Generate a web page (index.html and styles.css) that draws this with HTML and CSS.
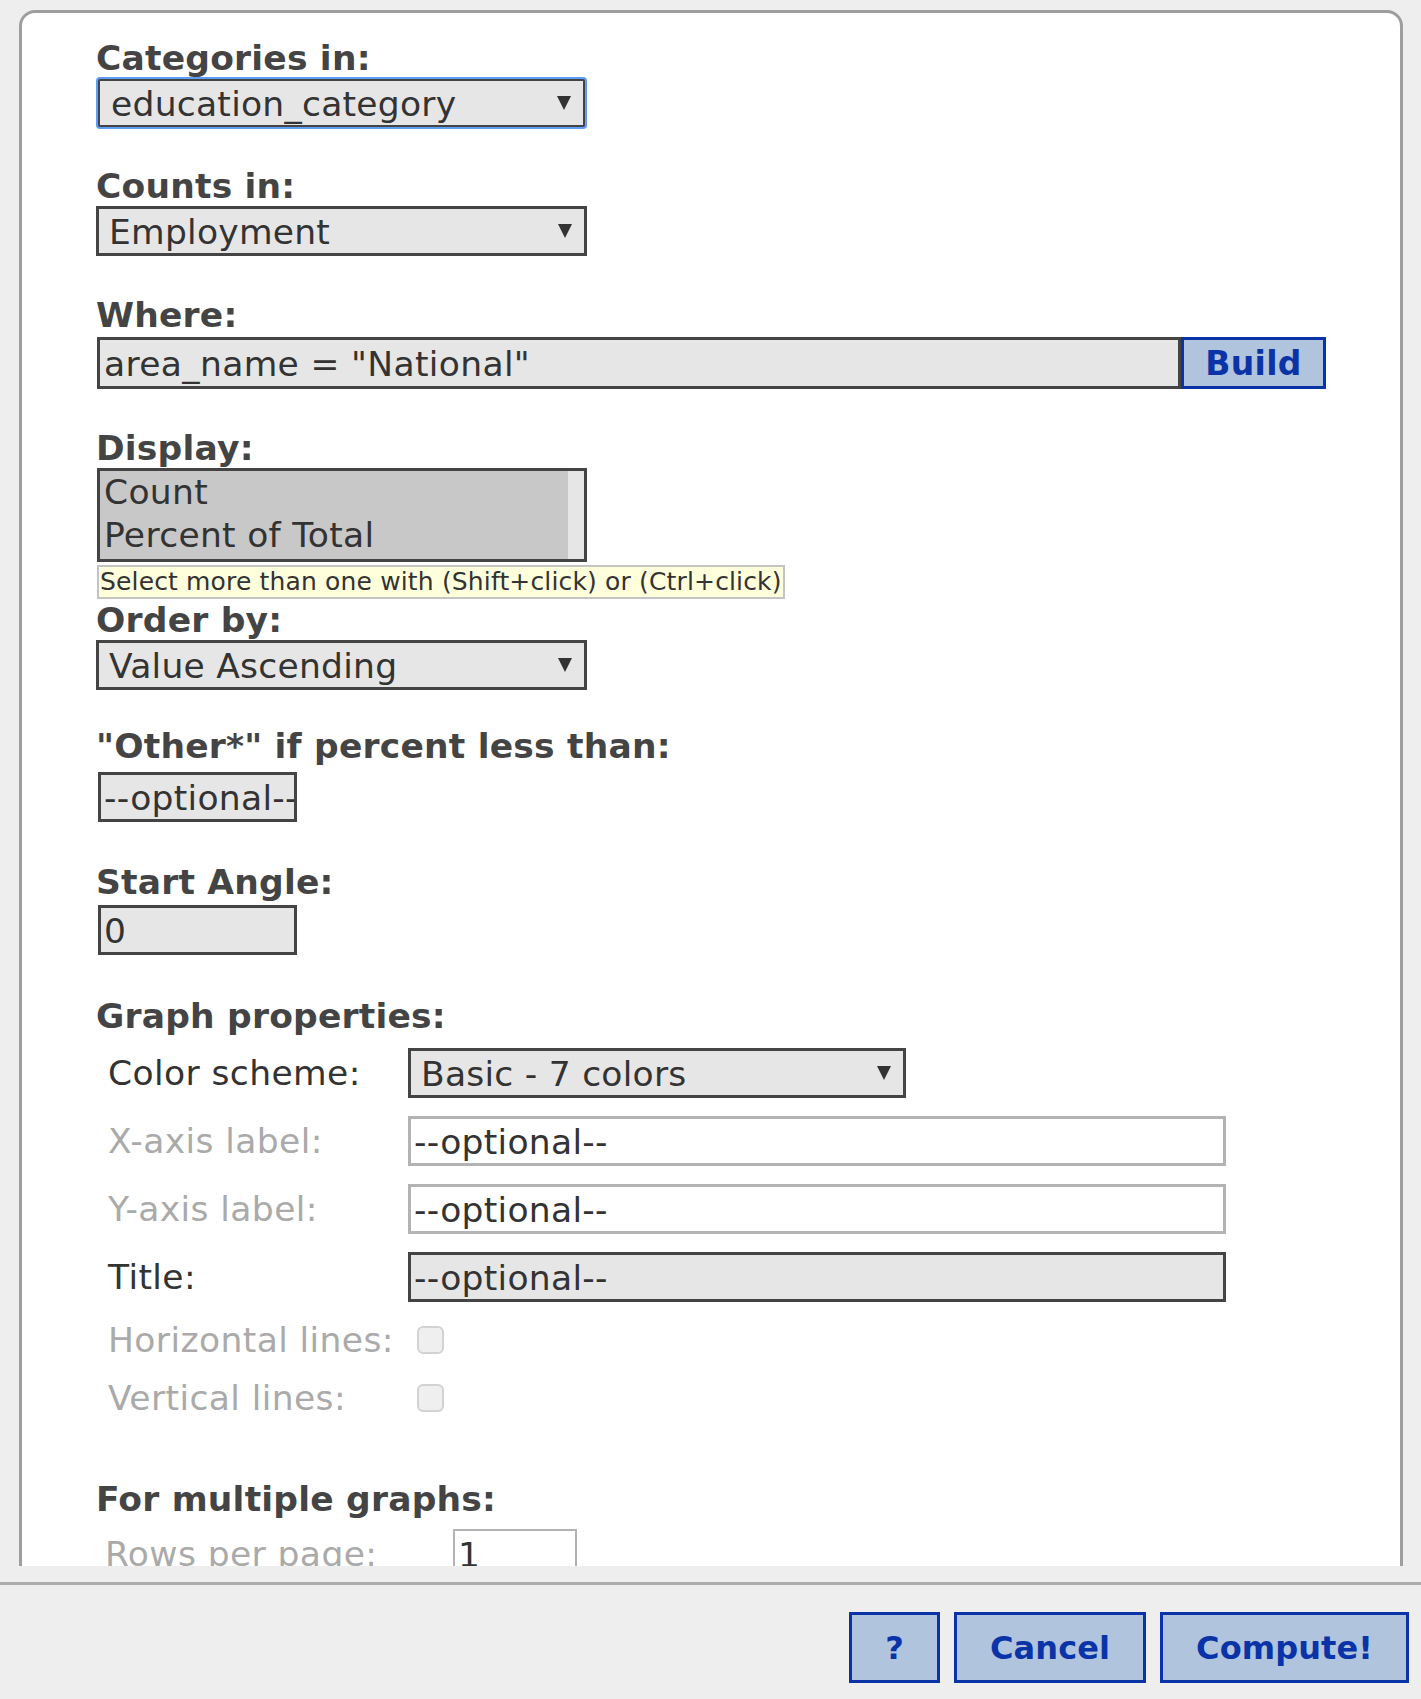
FILE: index.html
```html
<!DOCTYPE html>
<html>
<head>
<meta charset="utf-8">
<title>Pie chart</title>
<link rel="stylesheet" href="styles.css">
</head>
<body>
<div class="viewport">
  <div class="panel">
    <div class="field f-first">
      <div class="lbl">Categories in:</div>
      <div class="select focused"><span class="sel-text">education_category</span></div>
    </div>

    <div class="field f-counts">
      <div class="lbl">Counts in:</div>
      <div class="select"><span class="sel-text">Employment</span></div>
    </div>

    <div class="field f-where">
      <div class="lbl">Where:</div>
      <div class="where-row">
        <input class="where-input" type="text" value="area_name = &quot;National&quot;">
        <button class="btn-build" type="button">Build</button>
      </div>
    </div>

    <div class="field f-display">
      <div class="lbl">Display:</div>
      <div class="listbox">
        <div class="options">
          <div class="option">Count</div>
          <div class="option">Percent of Total</div>
        </div>
        <div class="track"></div>
      </div>
      <div class="hint-row"><span class="hint">Select more than one with (Shift+click) or (Ctrl+click)</span></div>
    </div>

    <div class="field f-order">
      <div class="lbl">Order by:</div>
      <div class="select"><span class="sel-text">Value Ascending</span></div>
    </div>

    <div class="field f-other">
      <div class="lbl">"Other*" if percent less than:</div>
      <input class="small-input gap6" type="text" value="--optional--">
    </div>

    <div class="field f-angle">
      <div class="lbl">Start Angle:</div>
      <input class="small-input gap3" type="text" value="0">
    </div>

    <div class="field f-graph">
      <div class="lbl">Graph properties:</div>
      <div class="grid">
        <div class="glabel">Color scheme:</div>
        <div class="select gselect"><span class="sel-text">Basic - 7 colors</span></div>

        <div class="glabel disabled">X-axis label:</div>
        <input class="ginput light" type="text" value="--optional--">

        <div class="glabel disabled">Y-axis label:</div>
        <input class="ginput light" type="text" value="--optional--">

        <div class="glabel">Title:</div>
        <input class="ginput dark" type="text" value="--optional--">

        <div class="glabel disabled">Horizontal lines:</div>
        <div><span class="cb"></span></div>

        <div class="glabel disabled">Vertical lines:</div>
        <div><span class="cb"></span></div>
      </div>
    </div>

    <div class="field f-multi">
      <div class="lbl">For multiple graphs:</div>
      <div class="grid2">
        <div class="glabel disabled">Rows per page:</div>
        <input class="rows-input" type="text" value="1">
      </div>
    </div>
  </div>
</div>

<div class="footer">
  <button class="btn" type="button">?</button>
  <button class="btn" type="button">Cancel</button>
  <button class="btn" type="button">Compute!</button>
</div>
</body>
</html>
```

FILE: styles.css
```css
* {
  box-sizing: border-box;
}

html,
body {
  margin: 0;
  padding: 0;
}

body {
  width: 1421px;
  height: 1699px;
  overflow: hidden;
  background: #eeeeee;
  font-family: "DejaVu Sans", Verdana, sans-serif;
  color: #444444;
}

.viewport {
  height: 1566px;
  overflow: hidden;
  padding: 10px 18px 0 19px;
}

.panel {
  background: #ffffff;
  border: 3px solid #9e9e9e;
  border-radius: 16px;
  padding: 25px 0 120px 74px;
}

.lbl {
  font-weight: bold;
  font-size: 34.5px;
  letter-spacing: 0.2px;
  line-height: 40px;
  color: #444444;
  white-space: nowrap;
}

.f-counts { margin-top: 39px; }
.f-where { margin-top: 39px; }
.f-display { margin-top: 39px; }
.f-order { margin-top: 1px; }
.f-other { margin-top: 36px; }
.f-angle { margin-top: 40px; }
.f-graph { margin-top: 41px; }
.f-multi { margin-top: 61px; }

/* select lookalike */
.select {
  position: relative;
  display: flex;
  align-items: center;
  width: 491px;
  height: 50px;
  border: 3px solid #444444;
  background: #e6e6e6;
  padding: 2px 0 0 10px;
  font-size: 34.5px;
  letter-spacing: 0.25px;
  color: #333333;
  white-space: nowrap;
}

.select::after {
  content: "";
  position: absolute;
  right: 12px;
  top: 50%;
  margin-top: -7px;
  border-left: 7.5px solid transparent;
  border-right: 7.5px solid transparent;
  border-top: 14px solid #333333;
}

.select.focused {
  width: 487px;
  height: 48px;
  margin: 1px 0 1px 2px;
  border-width: 2px;
  border-radius: 2px;
  padding-left: 11px;
  box-shadow: 0 0 0 2px #5d9df5;
}

/* where row */
.where-row {
  display: flex;
  margin-top: 2px;
  margin-left: 1px;
  height: 52px;
}

.where-input {
  width: 1084px;
  height: 52px;
  border: 3px solid #444444;
  background: #e6e6e6;
  padding: 2px 0 0 4px;
  font-family: inherit;
  font-size: 34.5px;
  letter-spacing: 0.35px;
  color: #333333;
  outline: none;
}

.btn-build {
  width: 145px;
  height: 52px;
  border: 3px solid #0a33a8;
  background: #b0c4de;
  color: #0a33a8;
  font-family: inherit;
  font-weight: bold;
  font-size: 33px;
  letter-spacing: 0.3px;
  padding: 0;
}

/* listbox */
.listbox {
  display: flex;
  width: 490px;
  height: 94px;
  margin-left: 1px;
  border: 3px solid #444444;
  background: #e6e6e6;
}

.options {
  width: 468px;
  background: #c8c8c8;
}

.option {
  height: 43px;
  line-height: 43px;
  padding-left: 4px;
  font-size: 34.5px;
  letter-spacing: 0.3px;
  color: #333333;
  white-space: nowrap;
}

.track {
  flex: 1;
}

.hint-row {
  display: flex;
  margin-top: 3px;
  margin-left: 1px;
}

.hint {
  border: 2px solid #c4c4c4;
  background: #ffffdc;
  font-size: 25px;
  letter-spacing: 0.15px;
  line-height: 30px;
  padding: 0 1px;
  color: #333333;
  white-space: nowrap;
}

/* small inputs */
.small-input {
  display: block;
  width: 199px;
  height: 50px;
  margin-left: 2px;
  border: 3px solid #444444;
  background: #e6e6e6;
  padding: 2px 0 0 3px;
  font-family: inherit;
  font-size: 34.5px;
  letter-spacing: 0.3px;
  color: #333333;
  outline: none;
}

.gap6 { margin-top: 6px; }
.gap3 { margin-top: 3px; }

/* graph properties */
.grid {
  display: grid;
  grid-template-columns: 300px 818px;
  row-gap: 18px;
  align-items: center;
  margin-top: 12px;
  margin-left: 12px;
}

.glabel {
  font-size: 34.5px;
  letter-spacing: 0.4px;
  line-height: 40px;
  color: #333333;
  white-space: nowrap;
}

.glabel.disabled {
  color: #aaaaaa;
}

.gselect {
  width: 498px;
}

.ginput {
  display: block;
  width: 818px;
  height: 50px;
  padding: 2px 0 0 3px;
  font-family: inherit;
  font-size: 34.5px;
  letter-spacing: 0.3px;
  color: #333333;
  outline: none;
}

.ginput.light {
  border: 3px solid #b3b3b3;
  background: #ffffff;
}

.ginput.dark {
  border: 3px solid #444444;
  background: #e6e6e6;
}

.cb {
  display: block;
  width: 27px;
  height: 28px;
  margin-left: 9px;
  border: 2px solid #d2d2d2;
  border-radius: 6px;
  background: #efefef;
}

/* multiple graphs */
.grid2 {
  display: grid;
  grid-template-columns: 348px 124px;
  align-items: center;
  margin-top: 10px;
  margin-left: 9px;
}

.rows-input {
  display: block;
  width: 124px;
  height: 50px;
  border: 2px solid #b3b3b3;
  background: #ffffff;
  padding: 2px 0 0 3px;
  font-family: inherit;
  font-size: 34.5px;
  color: #333333;
  outline: none;
}

/* footer */
.footer {
  display: flex;
  justify-content: flex-end;
  align-items: flex-start;
  gap: 14px;
  height: 117px;
  margin-top: 16px;
  border-top: 3px solid #ababab;
  padding: 27px 12px 0 0;
}

.btn {
  height: 71px;
  padding: 0 33px;
  border: 3px solid #0a33a8;
  background: #b0c4de;
  color: #0a33a8;
  font-family: inherit;
  font-weight: bold;
  font-size: 32px;
  letter-spacing: 0.1px;
}
```
